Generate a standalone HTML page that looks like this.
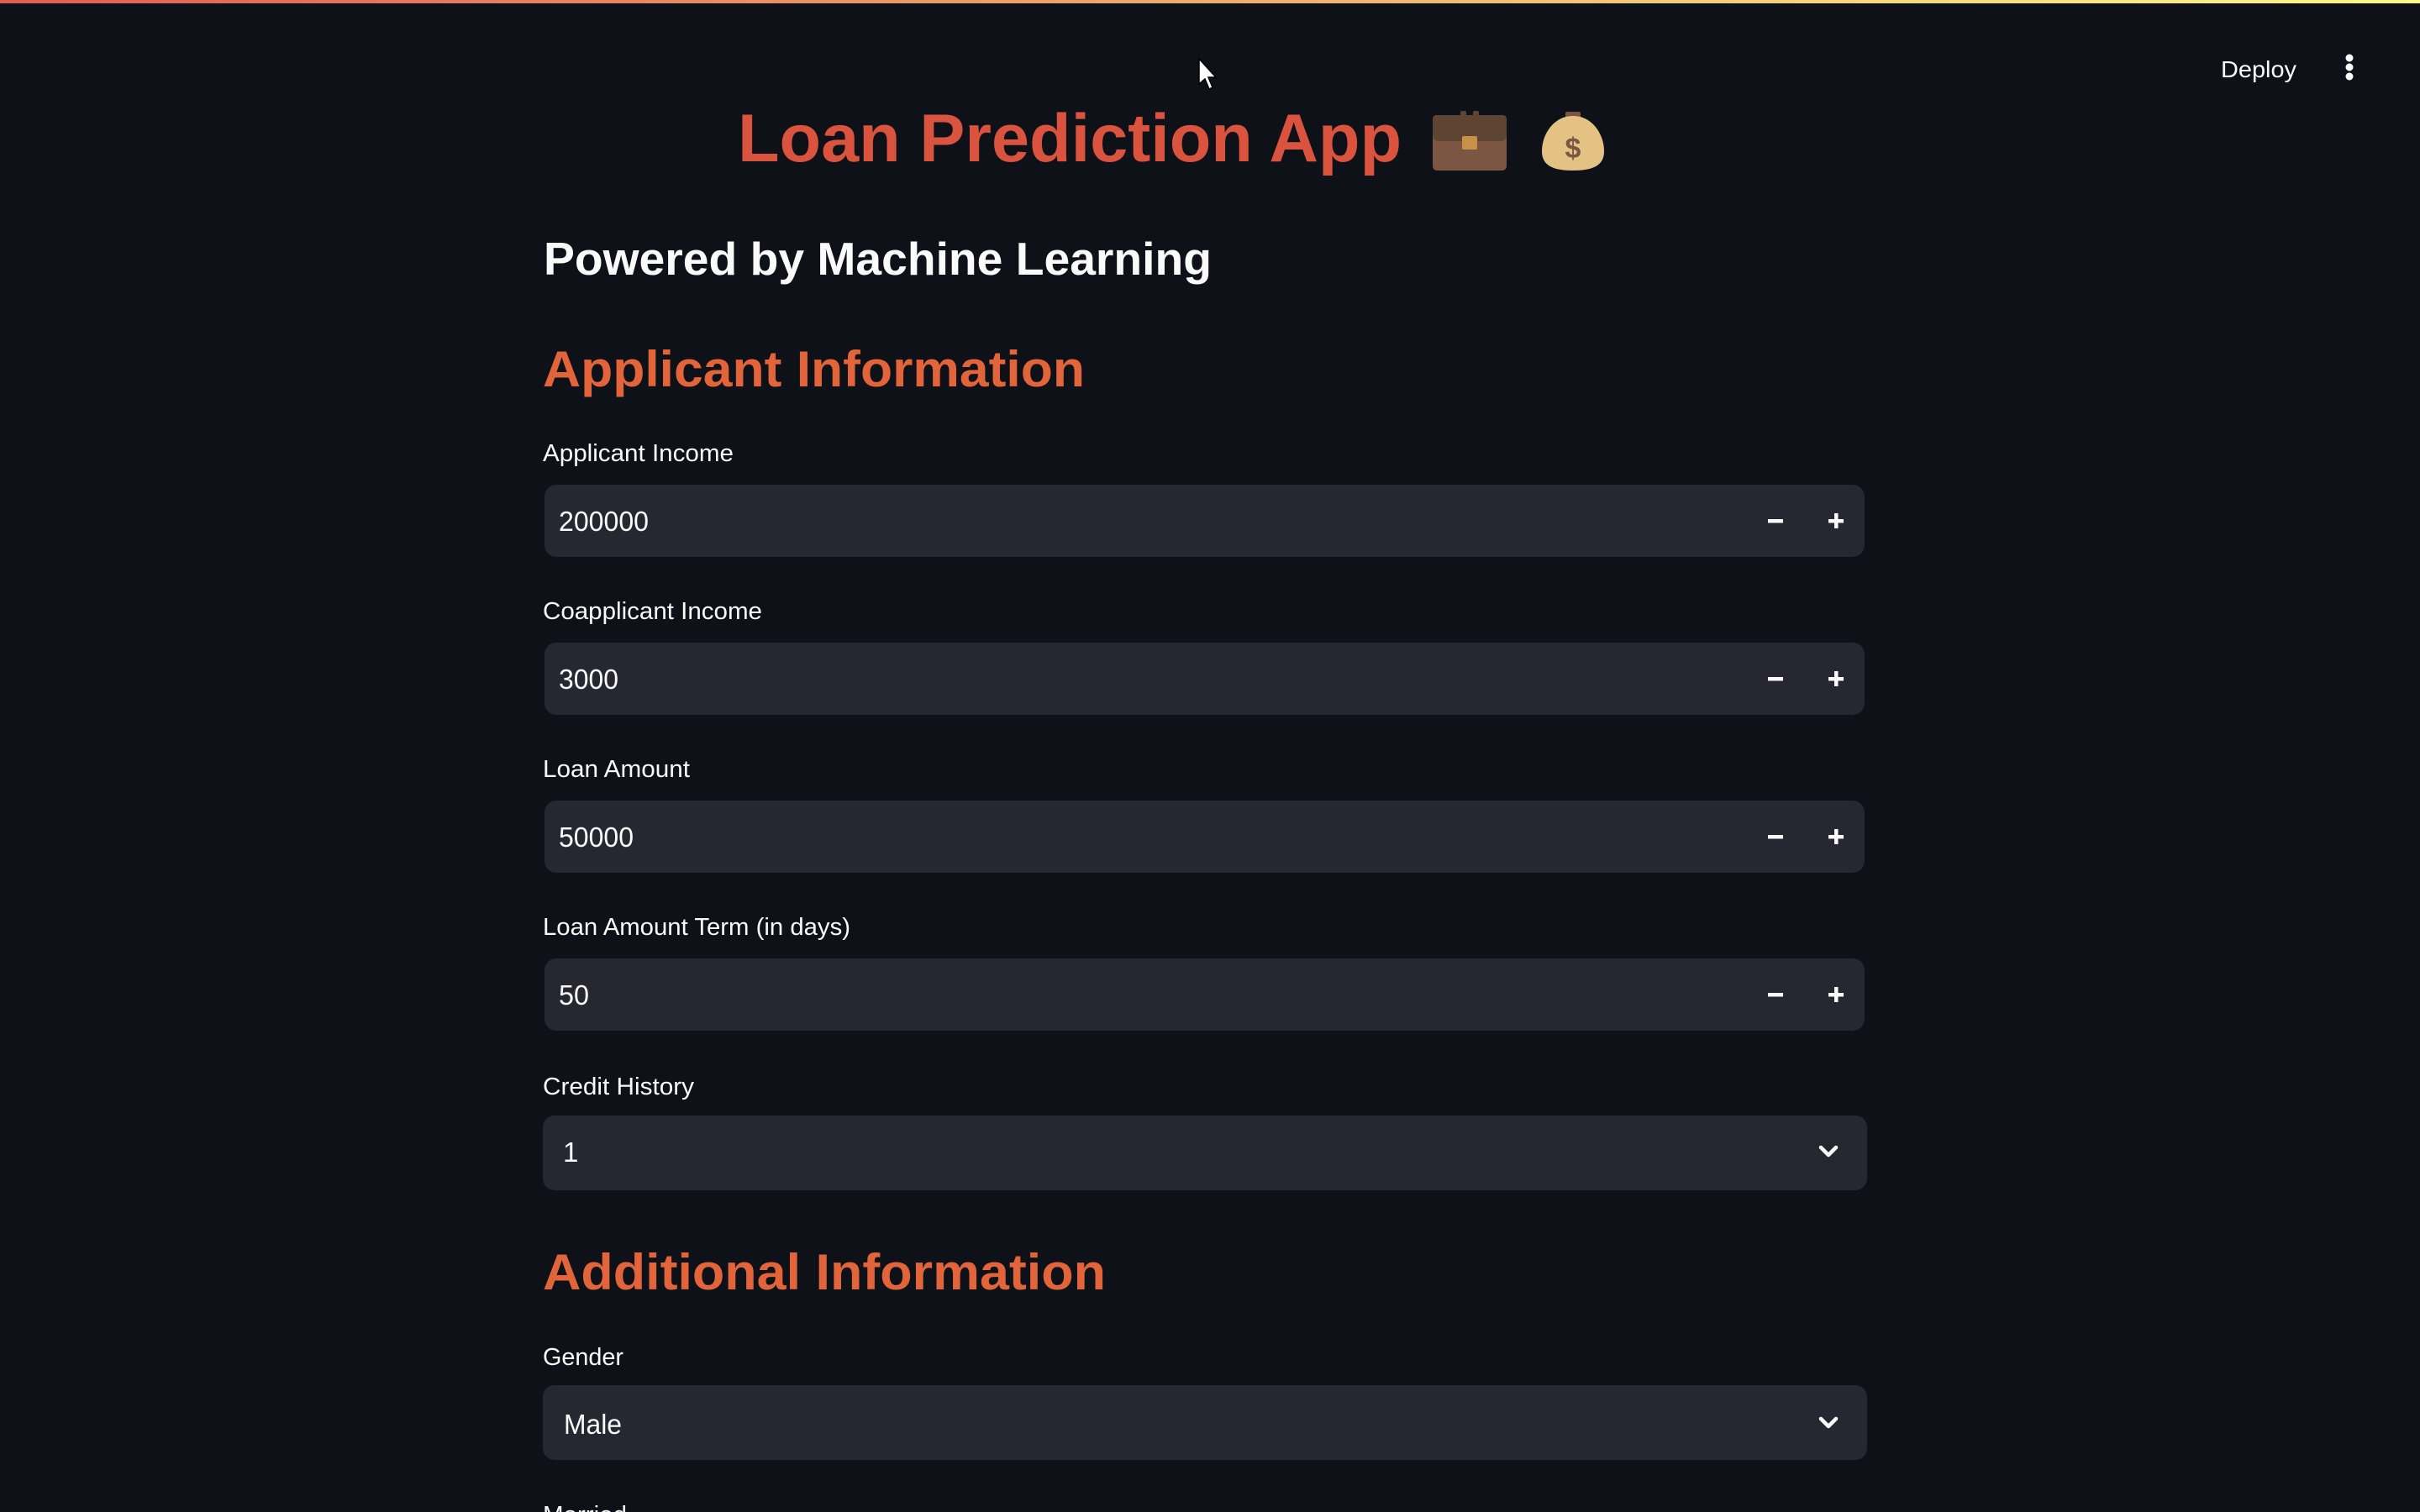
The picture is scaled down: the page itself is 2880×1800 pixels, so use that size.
<!DOCTYPE html>
<html><head><meta charset="utf-8">
<style>
html,body{margin:0;padding:0;background:#0e1117;width:2880px;height:1800px;overflow:hidden}
svg{display:block}
text{font-family:"Liberation Sans",sans-serif}
</style></head>
<body>
<svg width="2880" height="1800" viewBox="0 0 2880 1800" xmlns="http://www.w3.org/2000/svg">
<defs>
<linearGradient id="g" x1="0" x2="1" y1="0" y2="0">
<stop offset="0" stop-color="#e05d55"/><stop offset="1" stop-color="#fcfa8a"/>
</linearGradient>
</defs>
<rect x="0" y="0" width="2880" height="1800" fill="#0e1117"/>
<rect x="0" y="0" width="2880" height="4" fill="url(#g)"/>

<!-- header -->
<text x="2643" y="92" font-size="28" fill="#fafafa" textLength="90" lengthAdjust="spacingAndGlyphs">Deploy</text>
<circle cx="2796" cy="69" r="4.5" fill="#fafafa"/>
<circle cx="2796" cy="80" r="4.5" fill="#fafafa"/>
<circle cx="2796" cy="91" r="4.5" fill="#fafafa"/>

<!-- cursor -->
<path d="M1427 70 L1427 100 L1434 94 L1439 106 L1443 104 L1438 92 L1447 92 Z" fill="#fff" stroke="#000" stroke-width="1.5"/>

<!-- title -->
<text x="878" y="192" font-size="81" font-weight="bold" fill="#d9533f" textLength="790" lengthAdjust="spacingAndGlyphs">Loan Prediction App</text>
<!-- briefcase -->
<rect x="1738" y="132" width="7" height="10" rx="2" fill="#5e4533"/>
<rect x="1753" y="132" width="7" height="10" rx="2" fill="#5e4533"/>
<rect x="1705" y="137" width="88" height="66" rx="5" fill="#7b5643"/>
<path d="M1710 137 H1788 Q1793 137 1793 142 V160 Q1793 168 1785 168 H1713 Q1705 168 1705 160 V142 Q1705 137 1710 137 Z" fill="#5e4533"/>
<rect x="1740" y="162" width="18" height="16" rx="2" fill="#c89048"/>
<!-- money bag -->
<rect x="1863" y="133" width="18" height="7" rx="2" fill="#7b5643"/>
<path d="M1872 138 C1895 138 1909 160 1909 180 C1909 197 1896 203 1872 203 C1848 203 1835 197 1835 180 C1835 160 1849 138 1872 138 Z" fill="#e4c284"/>
<text x="1872" y="188" font-size="34" font-weight="bold" fill="#7b5643" text-anchor="middle">$</text>

<!-- subtitle -->
<text x="647" y="327" font-size="55" font-weight="bold" fill="#fafafa" textLength="795" lengthAdjust="spacingAndGlyphs">Powered by Machine Learning</text>

<!-- section 1 -->
<text x="646" y="460" font-size="60" font-weight="bold" fill="#e2643a" textLength="645" lengthAdjust="spacingAndGlyphs">Applicant Information</text>

<g font-size="29" fill="#fafafa">
<text x="646" y="549" textLength="227" lengthAdjust="spacingAndGlyphs">Applicant Income</text>
<text x="646" y="737" textLength="261" lengthAdjust="spacingAndGlyphs">Coapplicant Income</text>
<text x="646" y="925" textLength="175" lengthAdjust="spacingAndGlyphs">Loan Amount</text>
<text x="646" y="1113" textLength="366" lengthAdjust="spacingAndGlyphs">Loan Amount Term (in days)</text>
<text x="646" y="1303" textLength="180" lengthAdjust="spacingAndGlyphs">Credit History</text>
<text x="646" y="1625" textLength="96" lengthAdjust="spacingAndGlyphs">Gender</text>
<text x="646" y="1813" textLength="100" lengthAdjust="spacingAndGlyphs">Married</text>
</g>

<!-- number inputs -->
<g>
<rect x="648" y="577" width="1571" height="86" rx="14" fill="#262730"/>
<rect x="648" y="765" width="1571" height="86" rx="14" fill="#262730"/>
<rect x="648" y="953" width="1571" height="86" rx="14" fill="#262730"/>
<rect x="648" y="1141" width="1571" height="86" rx="14" fill="#262730"/>
</g>
<g font-size="33" fill="#fafafa">
<text x="665" y="632" textLength="107" lengthAdjust="spacingAndGlyphs">200000</text>
<text x="665" y="820" textLength="71" lengthAdjust="spacingAndGlyphs">3000</text>
<text x="665" y="1008" textLength="89" lengthAdjust="spacingAndGlyphs">50000</text>
<text x="665" y="1196" textLength="36" lengthAdjust="spacingAndGlyphs">50</text>
</g>
<g fill="#fafafa">
<rect x="2104" y="618" width="18" height="4.5"/><rect x="2176" y="618" width="18" height="4.5"/><rect x="2183" y="611" width="4.5" height="18"/>
<rect x="2104" y="806" width="18" height="4.5"/><rect x="2176" y="806" width="18" height="4.5"/><rect x="2183" y="799" width="4.5" height="18"/>
<rect x="2104" y="994" width="18" height="4.5"/><rect x="2176" y="994" width="18" height="4.5"/><rect x="2183" y="987" width="4.5" height="18"/>
<rect x="2104" y="1182" width="18" height="4.5"/><rect x="2176" y="1182" width="18" height="4.5"/><rect x="2183" y="1175" width="4.5" height="18"/>
</g>

<!-- selects -->
<rect x="646" y="1328" width="1576" height="89" rx="14" fill="#262730"/>
<text x="670" y="1383" font-size="33" fill="#fafafa">1</text>
<path d="M2167 1366 L2176 1375 L2185 1366" fill="none" stroke="#fafafa" stroke-width="4.5" stroke-linecap="round" stroke-linejoin="round"/>

<text x="646" y="1535" font-size="60" font-weight="bold" fill="#e2643a" textLength="670" lengthAdjust="spacingAndGlyphs">Additional Information</text>

<rect x="646" y="1649" width="1576" height="89" rx="14" fill="#262730"/>
<text x="671" y="1707" font-size="33" fill="#fafafa" textLength="69" lengthAdjust="spacingAndGlyphs">Male</text>
<path d="M2167 1689 L2176 1698 L2185 1689" fill="none" stroke="#fafafa" stroke-width="4.5" stroke-linecap="round" stroke-linejoin="round"/>
</svg>
</body></html>
